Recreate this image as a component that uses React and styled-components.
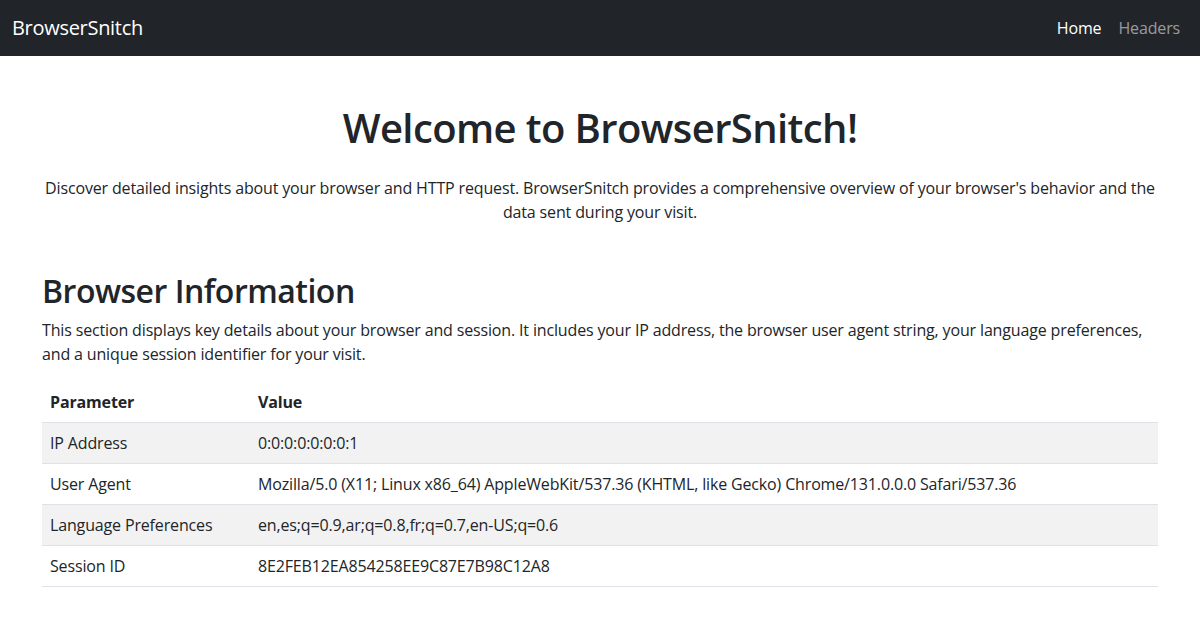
import React from "react";
import styled, { createGlobalStyle } from "styled-components";

const FONT = `"Open Sans", "Noto Sans", sans-serif`;

const GlobalStyle = createGlobalStyle`
  *, *::before, *::after { box-sizing: border-box; }
  body {
    margin: 0;
    font-family: ${FONT};
    font-size: 16px;
    line-height: 1.5;
    letter-spacing: -0.15px;
    color: #212529;
    background: #fff;
  }
`;

const rows = [
  ["IP Address", "0:0:0:0:0:0:0:1"],
  ["User Agent", "Mozilla/5.0 (X11; Linux x86_64) AppleWebKit/537.36 (KHTML, like Gecko) Chrome/131.0.0.0 Safari/537.36"],
  ["Language Preferences", "en,es;q=0.9,ar;q=0.8,fr;q=0.7,en-US;q=0.6"],
  ["Session ID", "8E2FEB12EA854258EE9C87E7B98C12A8"],
];

export default function App() {
  return (
    <>
      <GlobalStyle />
      <Navbar>
        <Brand href="#">BrowserSnitch</Brand>
        <NavLinks>
          <NavLink href="#" active>Home</NavLink>
          <NavLink href="#">Headers</NavLink>
        </NavLinks>
      </Navbar>
      <Container>
        <Title>Welcome to BrowserSnitch!</Title>
        <Lead>
          Discover detailed insights about your browser and HTTP request. BrowserSnitch provides a comprehensive
          overview of your browser's behavior and the data sent during your visit.
        </Lead>
        <Section>
          <H2>Browser Information</H2>
          <Text>
            This section displays key details about your browser and session. It includes your IP address, the browser
            user agent string, your language preferences, and a unique session identifier for your visit.
          </Text>
          <Table>
            <thead>
              <tr>
                <Th>Parameter</Th>
                <Th>Value</Th>
              </tr>
            </thead>
            <tbody>
              {rows.map(([k, v], i) => (
                <Row key={k} striped={i % 2 === 0}>
                  <Td>{k}</Td>
                  <Td>{v}</Td>
                </Row>
              ))}
            </tbody>
          </Table>
        </Section>
      </Container>
    </>
  );
}

const Navbar = styled.nav`
  height: 56px;
  background: #212529;
  display: flex;
  align-items: center;
  justify-content: space-between;
  padding: 0 12px;
`;

const Brand = styled.a`
  color: #fff;
  font-size: 20px;
  letter-spacing: -0.3px;
  text-decoration: none;
`;

const NavLinks = styled.div`
  display: flex;
  gap: 17px;
  padding-right: 8px;
`;

const NavLink = styled.a`
  color: ${(p) => (p.active ? "#fff" : "rgba(255,255,255,0.55)")};
  text-decoration: none;
  font-size: 16px;
`;

const Container = styled.main`
  max-width: 1140px;
  margin: 48px auto 0;
  padding: 0 12px;
`;

const Title = styled.h1`
  margin: 0 0 24px;
  text-align: center;
  font-size: 40px;
  font-weight: 600;
  letter-spacing: -0.6px;
  line-height: 1.2;
`;

const Lead = styled.p`
  margin: 0;
  text-align: center;
`;

const Section = styled.section`
  margin-top: 48px;
`;

const H2 = styled.h2`
  margin: 0 0 8px;
  font-size: 32px;
  font-weight: 600;
  letter-spacing: -0.5px;
  line-height: 1.2;
`;

const Text = styled.p`
  margin: 0 0 16px;
`;

const Table = styled.table`
  width: 100%;
  border-collapse: collapse;
  margin-bottom: 16px;
`;

const Th = styled.th`
  text-align: left;
  font-weight: 700;
  padding: 8px;
  border-bottom: 1px solid #dee2e6;
  &:first-child { width: 208px; }
`;

const Row = styled.tr`
  background: ${(p) => (p.striped ? "#f2f2f2" : "#fff")};
`;

const Td = styled.td`
  padding: 8px;
  border-bottom: 1px solid #dee2e6;
`;
